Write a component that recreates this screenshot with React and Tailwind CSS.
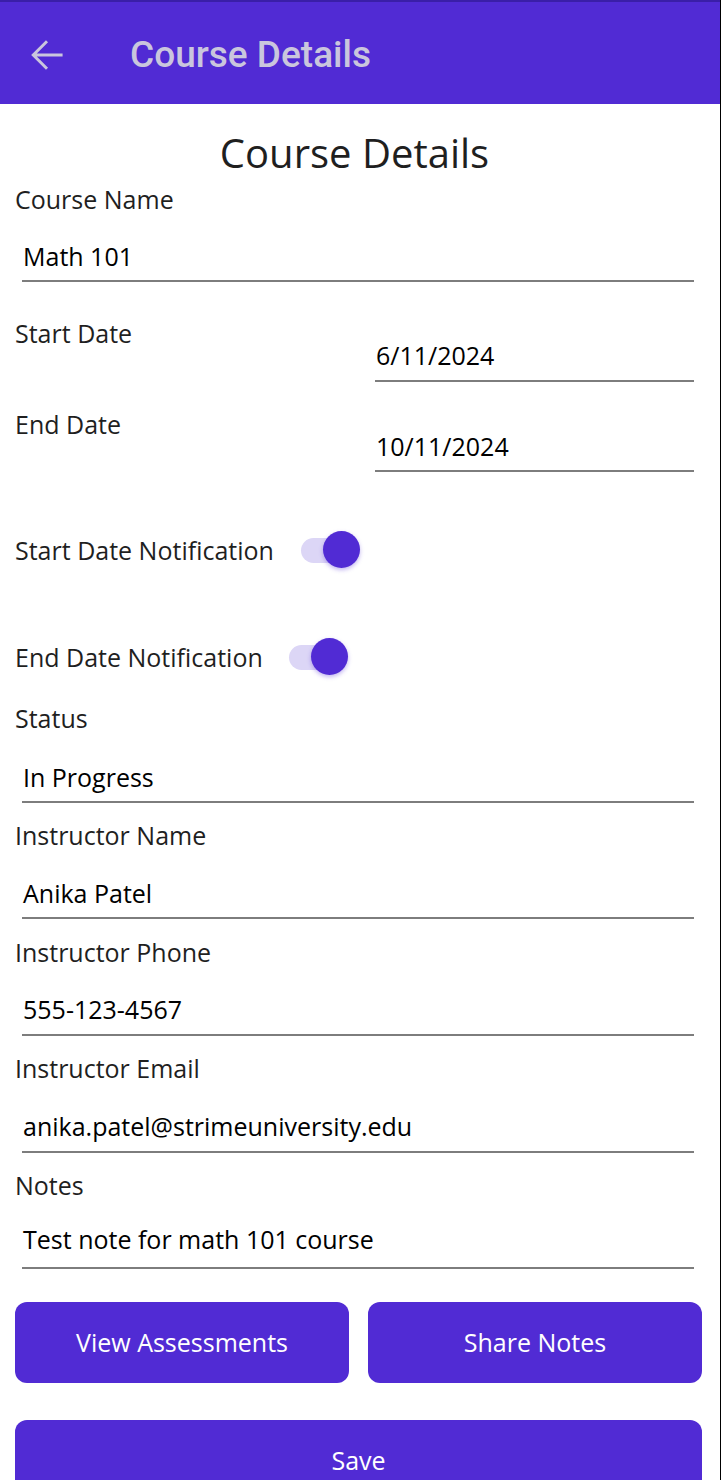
import React from 'react';

const Label = ({ children, className = '' }) => (
    <div className={`text-[25px] leading-[30px] text-[#1f1f1f] ${className}`}>{children}</div>
);

const Entry = ({ value, pt, pb = 'pb-[9px]' }) => (
    <div className={`ml-[7px] border-b-2 border-[#7d7d7d] text-[25px] leading-[30px] text-black ${pt} ${pb}`}>
        <span className="pl-px">{value}</span>
    </div>
);

const Toggle = () => (
    <div className="relative h-[38px] w-[60px]">
        <div className="absolute left-0 top-[7px] h-[25px] w-[52px] rounded-full bg-[#dcd6f6]" />
        <div className="absolute left-[22px] top-0 h-[37px] w-[37px] rounded-full bg-[#512bd4] shadow-[0_2px_4px_rgba(81,43,212,0.35)]" />
    </div>
);

const App = () => {
    return (
        <div className="relative h-[1480px] w-[722px] overflow-hidden bg-white font-['Open_Sans',sans-serif]">
            {/* Right edge rule */}
            <div className="absolute right-px top-0 h-full w-px bg-black" />

            {/* App bar */}
            <div className="flex h-[104px] w-[720px] items-center border-t-2 border-[#3a1ea8] bg-[#512bd4] pt-[4px]">
                <svg className="ml-[25px] h-[44px] w-[44px] text-[#cac6dd]" viewBox="0 0 24 24" fill="none" stroke="currentColor" strokeWidth="1.6">
                    <path d="M20.5 12H4.5M12 19.5L4.5 12 12 4.5" />
                </svg>
                <span className="ml-[61px] font-['Roboto',sans-serif] text-[37px] font-medium text-[#cac6dd]">Course Details</span>
            </div>

            <div className="pl-[15px] pr-[28px]">
                <h1 className="mt-[24px] h-[50px] text-center text-[40px] font-medium leading-[50px] text-[#1f1f1f]">Course Details</h1>

                <Label className="mt-[6px]">Course Name</Label>
                <Entry value="Math 101" pt="pt-[27px]" />

                <div className="mt-[36px] flex items-start justify-between">
                    <Label>Start Date</Label>
                    <div className="w-[319px] border-b-2 border-[#7d7d7d] pb-[10px] pl-px pt-[22px] text-[25px] leading-[30px] text-black">6/11/2024</div>
                </div>

                <div className="mt-[27px] flex items-start justify-between">
                    <Label>End Date</Label>
                    <div className="w-[319px] border-b-2 border-[#7d7d7d] pb-[9px] pl-px pt-[22px] text-[25px] leading-[30px] text-black">10/11/2024</div>
                </div>

                <div className="mt-[58px] flex h-[40px] items-center gap-[27px]">
                    <Label>Start Date Notification</Label>
                    <Toggle />
                </div>

                <div className="mt-[67px] flex h-[40px] items-center gap-[26px]">
                    <Label>End Date Notification</Label>
                    <Toggle />
                </div>

                <Label className="mt-[26px]">Status</Label>
                <Entry value="In Progress" pt="pt-[29px]" />

                <Label className="mt-[17px]">Instructor Name</Label>
                <Entry value="Anika Patel" pt="pt-[28px]" />

                <Label className="mt-[18px]">Instructor Phone</Label>
                <Entry value="555-123-4567" pt="pt-[27px]" pb="pb-[10px]" />

                <Label className="mt-[17px]">Instructor Email</Label>
                <Entry value="anika.patel@strimeuniversity.edu" pt="pt-[28px]" pb="pb-[10px]" />

                <Label className="mt-[17px]">Notes</Label>
                <Entry value="Test note for math 101 course" pt="pt-[24px]" pb="pb-[13px]" />
            </div>

            <div className="mt-[33px] flex gap-[19px] pl-[15px] pr-[20px]">
                <button className="h-[81px] flex-1 rounded-[12px] bg-[#512bd4] text-[25px] text-white">View Assessments</button>
                <button className="h-[81px] flex-1 rounded-[12px] bg-[#512bd4] text-[25px] text-white">Share Notes</button>
            </div>

            <div className="mt-[37px] pl-[15px] pr-[20px]">
                <button className="h-[81px] w-full rounded-[12px] bg-[#512bd4] text-[25px] text-white">Save</button>
            </div>
        </div>
    );
};

export default App;
